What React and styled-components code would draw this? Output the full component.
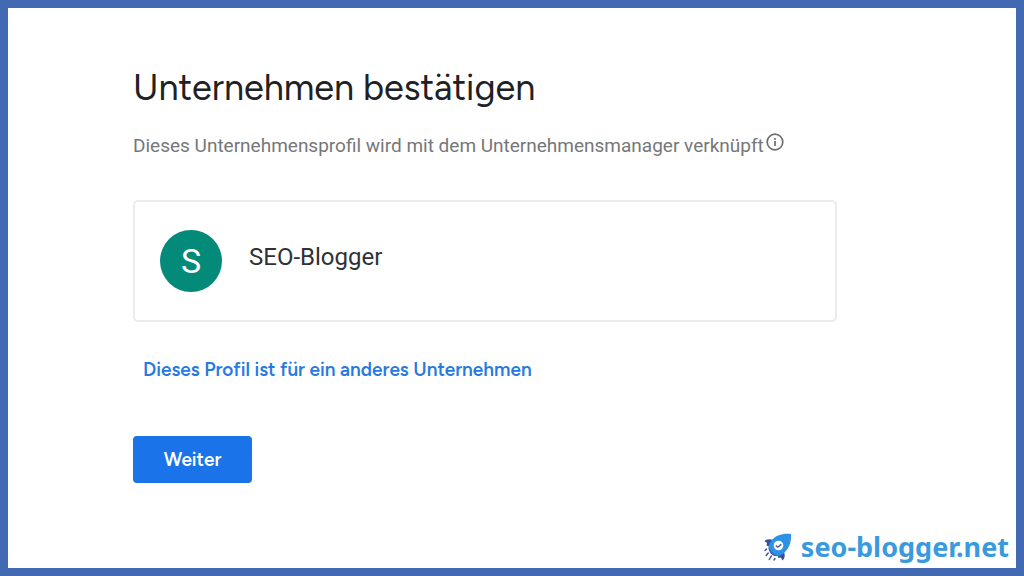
import React from "react";
import styled, { createGlobalStyle } from "styled-components";

const displayFont = 'Figtree, Inter, sans-serif';

const GlobalStyle = createGlobalStyle`
  *, *::before, *::after { box-sizing: border-box; }
  body { margin: 0; background: #fff; font-family: Roboto, "Liberation Sans", sans-serif; }
`;

const Frame = styled.div`
  display: flex;
  flex-direction: column;
  min-height: 100vh;
  border: 8px solid #4369b2;
  background: #fff;
`;

const Main = styled.main`
  display: flex;
  flex-direction: column;
  align-items: flex-start;
  flex: 1;
  padding: 56px 125px 0;
`;

const Title = styled.h1`
  margin: 0;
  color: #202124;
  font-family: ${displayFont};
  font-size: 36px;
  font-weight: 400;
  line-height: 48px;
`;

const Intro = styled.p`
  display: flex;
  align-items: flex-start;
  gap: 2px;
  margin: 20px 0 0;
  color: #757779;
  font-size: 19px;
  line-height: 28px;
  white-space: nowrap;
`;

const InfoButton = styled.button`
  display: flex;
  padding: 1px 0 0;
  border: 0;
  background: none;
  color: #6b6d70;
`;

const ProfileCard = styled.section`
  display: flex;
  align-items: center;
  gap: 27px;
  width: 100%;
  max-width: 704px;
  margin-top: 40px;
  padding: 28px 25px;
  border: 2px solid #ebebec;
  border-radius: 5px;
`;

const Avatar = styled.span`
  display: grid;
  place-items: center;
  width: 62px;
  height: 62px;
  border-radius: 50%;
  background: #038a78;
  color: #fff;
  font-size: 34px;
  line-height: 40px;
`;

const ProfileName = styled.h2`
  margin: 0;
  padding-bottom: 8px;
  color: #303135;
  font-size: 24px;
  font-weight: 400;
  line-height: 32px;
`;

const OtherLink = styled.a`
  margin: 34px 0 0 10px;
  color: #267ae0;
  font-family: ${displayFont};
  font-size: 19px;
  font-weight: 600;
  line-height: 28px;
  text-decoration: none;
`;

const NextButton = styled.button`
  min-width: 119px;
  margin-top: 52px;
  padding: 10px 24px;
  border: 0;
  border-radius: 4px;
  background: #1a73e8;
  color: #fff;
  font-family: ${displayFont};
  font-size: 19px;
  font-weight: 600;
  line-height: 27px;
`;

const Footer = styled.footer`
  display: flex;
  justify-content: flex-end;
  padding: 0 7px 1px 0;
`;

const Brand = styled.a`
  display: flex;
  align-items: center;
  gap: 8px;
  color: #3b9add;
  font-family: "Noto Sans", "Open Sans", sans-serif;
  font-size: 27px;
  font-weight: 700;
  line-height: 40px;
  text-decoration: none;
`;

const InfoIcon = () => (
  <svg width="18" height="18" viewBox="0 0 18 18" fill="none" aria-hidden="true">
    <circle cx="9" cy="9" r="7.8" stroke="currentColor" strokeWidth="1.7" />
    <path d="M9 8v5M9 5v1.8" stroke="currentColor" strokeWidth="1.7" />
  </svg>
);

const Rocket = () => (
  <svg width="30" height="30" viewBox="0 0 30 30" aria-hidden="true">
    <path d="M10 8C6 6.500 3 7.500 1.500 9l2.500 2-.5 2.500 4 1.500zM21 20c1.500 4 .5 6.500-1.500 8.500l-1.700-3-2.500.5-.8-4z" fill="#39509a" />
    <path d="M28 2C20 1 13 3 8.500 8.500c-2.500 3-3.300 6-2.800 9L11.500 24c3.500 .5 7-.5 9.500-3C26.500 16 28.500 9.500 28 2z" fill="#2d91e6" />
    <path d="M5.800 15c-.5 3.500 1.500 7.500 5.700 9l3.500-.4C10.500 22.500 7.500 19.500 5.800 15z" fill="#3d60b5" />
    <circle cx="15.500" cy="13.500" r="4.800" fill="#fff" />
    <path d="M12.800 13.500l2 1.700 3.500-3" fill="none" stroke="#39509a" strokeWidth="1.400" />
    <path d="M3.500 17l-1.500 1.500M5.200 21l-2 2.500M8.300 24l-2 3.500M12 26.500l-1 1.500" fill="none" stroke="#45538f" strokeWidth="1.500" strokeLinecap="round" />
  </svg>
);

export default function App() {
  return (
    <>
      <GlobalStyle />
      <Frame lang="de">
        <Main>
          <Title>Unternehmen bestätigen</Title>
          <Intro>
            Dieses Unternehmensprofil wird mit dem Unternehmensmanager verknüpft
            <InfoButton type="button" aria-label="Info"><InfoIcon /></InfoButton>
          </Intro>
          <ProfileCard>
            <Avatar aria-hidden="true">S</Avatar>
            <ProfileName>SEO-Blogger</ProfileName>
          </ProfileCard>
          <OtherLink href="#anderes-unternehmen">Dieses Profil ist für ein anderes Unternehmen</OtherLink>
          <NextButton type="button">Weiter</NextButton>
        </Main>
        <Footer>
          <Brand href="#start"><Rocket />seo-blogger.net</Brand>
        </Footer>
      </Frame>
    </>
  );
}
